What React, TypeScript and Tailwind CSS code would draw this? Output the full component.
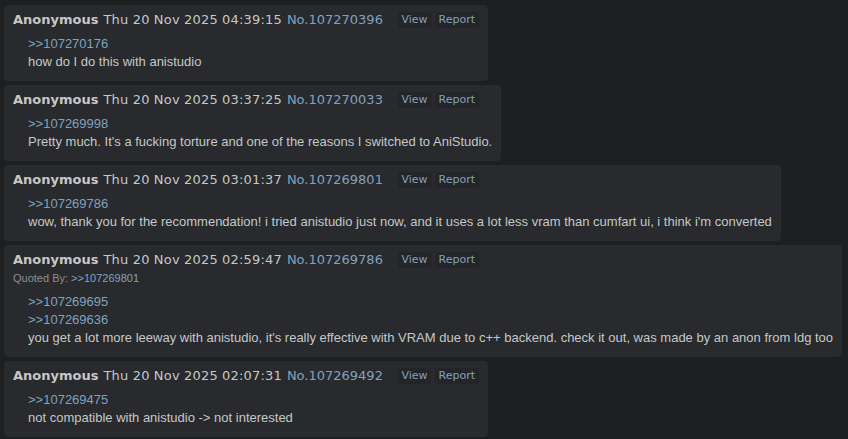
import React from 'react';

interface Post {
  no: string;
  date: string;
  quotedBy?: string[];
  quotes: string[];
  text: string;
}

const posts: Post[] = [
  {
    no: '107270396',
    date: 'Thu 20 Nov 2025 04:39:15',
    quotes: ['107270176'],
    text: 'how do I do this with anistudio',
  },
  {
    no: '107270033',
    date: 'Thu 20 Nov 2025 03:37:25',
    quotes: ['107269998'],
    text: "Pretty much. It's a fucking torture and one of the reasons I switched to AniStudio.",
  },
  {
    no: '107269801',
    date: 'Thu 20 Nov 2025 03:01:37',
    quotes: ['107269786'],
    text: "wow, thank you for the recommendation! i tried anistudio just now, and it uses a lot less vram than cumfart ui, i think i'm converted",
  },
  {
    no: '107269786',
    date: 'Thu 20 Nov 2025 02:59:47',
    quotedBy: ['107269801'],
    quotes: ['107269695', '107269636'],
    text: "you get a lot more leeway with anistudio, it's really effective with VRAM due to c++ backend. check it out, was made by an anon from ldg too",
  },
  {
    no: '107269492',
    date: 'Thu 20 Nov 2025 02:07:31',
    quotes: ['107269475'],
    text: 'not compatible with anistudio -> not interested',
  },
];

const PostCard = ({ post }: { post: Post }) => {
  return (
    <div className="w-fit rounded-[4px] bg-[#282a2e] pt-[6px] pb-[10px] pl-[9px] pr-[9px]">
      <div className="flex h-[18px] items-center whitespace-nowrap font-['DejaVu_Sans',sans-serif] text-[13px] leading-[18px] text-[#c5c8c6]">
        <span className="font-bold">Anonymous</span>
        <span className="ml-[5px] tracking-[0.17px]">{post.date}</span>
        <span className="ml-[5px] text-[#81a2be]">No.{post.no}</span>
        <span className="ml-[15px] flex h-[16px] items-center rounded-[2px] bg-[#232528] px-[3.5px] text-[11px] text-[#81a2be]">
          View
        </span>
        <span className="ml-[4px] flex h-[16px] items-center rounded-[2px] bg-[#232528] px-[3.5px] text-[11px] text-[#81a2be]">
          Report
        </span>
      </div>
      {post.quotedBy && (
        <div className="h-[18px] font-['Liberation_Sans',Arial,sans-serif] text-[11px] leading-[18px] text-[#8d8f91]">
          Quoted By:{' '}
          {post.quotedBy.map((q) => (
            <span key={q} className="text-[#81a2be]">
              &gt;&gt;{q}
            </span>
          ))}
        </div>
      )}
      <div className="ml-[15px] mt-[6px] whitespace-nowrap font-['Liberation_Sans',Arial,sans-serif] text-[13px] leading-[18px] text-[#c5c8c6]">
        {post.quotes.map((q) => (
          <div key={q} className="text-[#81a2be]">
            &gt;&gt;{q}
          </div>
        ))}
        <div>{post.text}</div>
      </div>
    </div>
  );
};

export default function App() {
  return (
    <div className="flex min-h-[439px] flex-col items-start gap-[4px] bg-[#1d1f21] px-[4px] pt-[5px]">
      {posts.map((post) => (
        <PostCard key={post.no} post={post} />
      ))}
    </div>
  );
}
